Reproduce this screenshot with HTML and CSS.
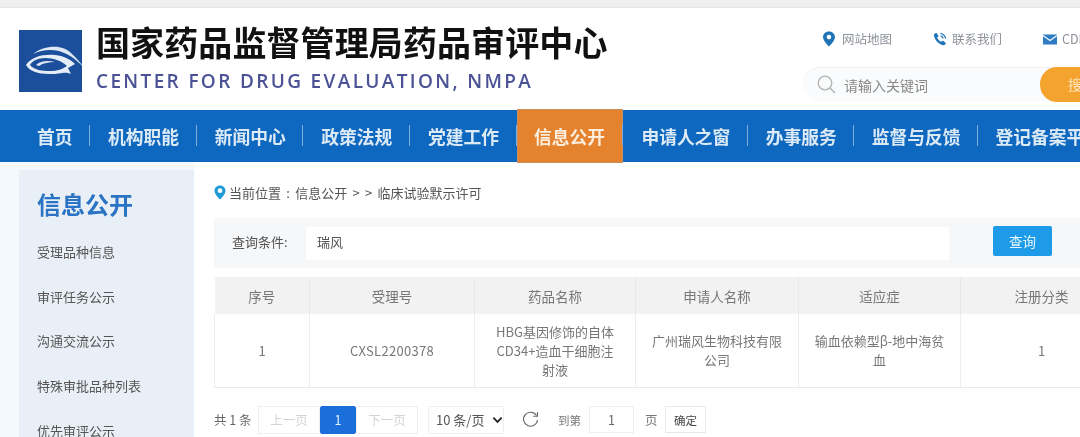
FILE: index.html
```html
<!DOCTYPE html>
<html lang="zh-CN">
<head>
<meta charset="utf-8">
<title>国家药品监督管理局药品审评中心</title>
<link rel="stylesheet" href="styles.css">
</head>
<body>
<div class="page">
  <div class="topstrip"></div>
  <header class="header">
    <svg class="logo" viewBox="0 0 63 62" aria-hidden="true">
      <rect width="63" height="62" fill="#1b4f9c"/>
      <path d="M14 24C26 15 44 14 53 24C58 29 62 33 65 38C58 30 50 24 40 21C31 19 22 20 14 24Z" fill="#dfe8f4"/>
      <path d="M7 35C12 27 24 24 36 25C46 26 52 30 56 34L49 38L52 44C46 41 42 44 30 44C19 44 10 41 7 35ZM11 35C15 40 23 41 31 41C38 41 44 39 48 36C43 31 35 28 26 28C19 28 13 31 11 35Z" fill="#e6edf6" fill-rule="evenodd"/>
      <path d="M17 35C21 31 29 30 36 32C30 32 24 33 20 36Z" fill="#dfe8f4"/>
    </svg>
    <div class="brand">
      <h1 class="brand-cn">国家药品监督管理局药品审评中心</h1>
      <p class="brand-en">CENTER FOR DRUG EVALUATION, NMPA</p>
    </div>
    <div class="tools">
      <div class="tool-links">
        <span class="tool tool-map">
          <svg class="tool-icon" viewBox="0 0 14 16" aria-hidden="true"><path d="M7 0.5C3.4 0.5 1 3 1 6C1 10 7 15.5 7 15.5S13 10 13 6C13 3 10.600 0.5 7 0.5ZM7 3.800A2.300 2.300 0 1 1 7 8.400A2.300 2.300 0 0 1 7 3.800Z" fill="#1f74b8" fill-rule="evenodd"/></svg>
          网站地图
        </span>
        <span class="tool tool-phone">
          <svg class="tool-icon" viewBox="0 0 15 15" aria-hidden="true"><path d="M1 2.500L3.500 0.800L6 4.300L4.500 5.800C5 7.500 7 9.800 9 10.500L10.500 9.200L14 12L12 14.300C7 14.500 0.800 8 1 2.500Z" fill="#1f74b8"/><path d="M8 1.500C10.800 2 12.800 4 13.500 7M8 4.200C9.500 4.500 10.500 5.500 11 7" fill="none" stroke="#1f74b8" stroke-width="1.200"/></svg>
          联系我们
        </span>
        <span class="tool tool-mail">
          <svg class="tool-icon mail" viewBox="0 0 14 11" aria-hidden="true"><rect y="0.500" width="14" height="10" fill="#2f7bc4"/><path d="M0 1.500L7 6.500L14 1.500" fill="none" stroke="#fff" stroke-width="1.100"/></svg>
          CDE
        </span>
      </div>
      <div class="searchbar">
        <svg class="search-icon" viewBox="0 0 19 19" aria-hidden="true"><circle cx="8" cy="8" r="6.800" fill="none" stroke="#b3b3b3" stroke-width="1.300"/><path d="M13 13L18 18" stroke="#b3b3b3" stroke-width="1.500"/></svg>
        <span class="placeholder">请输入关键词</span>
        <span class="search-btn">搜索</span>
      </div>
    </div>
  </header>
  <nav class="nav">
    <a class="nav-item">首页</a>
    <a class="nav-item">机构职能</a>
    <a class="nav-item">新闻中心</a>
    <a class="nav-item">政策法规</a>
    <a class="nav-item">党建工作</a>
    <a class="nav-item active">信息公开</a>
    <a class="nav-item wide">申请人之窗</a>
    <a class="nav-item slim">办事服务</a>
    <a class="nav-item slim">监督与反馈</a>
    <a class="nav-item">登记备案平台</a>
  </nav>
  <div class="content">
    <aside class="sidebar">
      <h2 class="side-title">信息公开</h2>
      <ul class="side-list">
        <li>受理品种信息</li>
        <li>审评任务公示</li>
        <li>沟通交流公示</li>
        <li>特殊审批品种列表</li>
        <li>优先审评公示</li>
      </ul>
    </aside>
    <main class="main">
      <div class="crumb">
        <svg class="crumb-icon" viewBox="0 0 12 15" aria-hidden="true"><path d="M6 0.500C2.800 0.500 0.500 2.800 0.500 5.700C0.500 9.500 6 14.500 6 14.500S11.500 9.500 11.500 5.700C11.500 2.800 9.200 0.500 6 0.500ZM6 3.300A2.400 2.400 0 1 1 6 8.100A2.400 2.400 0 0 1 6 3.300Z" fill="#1e9ad6" fill-rule="evenodd"/></svg>
        <span>当前位置 : 信息公开 &gt; &gt; 临床试验默示许可</span>
      </div>
      <div class="query">
        <span class="query-label">查询条件:</span>
        <div class="query-input">瑞风</div>
        <button class="query-btn" type="button">查询</button>
      </div>
      <div class="table-wrap">
        <table class="grid">
          <colgroup>
            <col class="c1"><col class="c2"><col class="c3"><col class="c4"><col class="c5"><col class="c6">
          </colgroup>
          <thead>
            <tr><th>序号</th><th>受理号</th><th>药品名称</th><th>申请人名称</th><th>适应症</th><th>注册分类</th></tr>
          </thead>
          <tbody>
            <tr>
              <td>1</td>
              <td class="code">CXSL2200378</td>
              <td>HBG基因修饰的自体CD34+造血干细胞注射液</td>
              <td class="tight">广州瑞风生物科技有限公司</td>
              <td class="tight">输血依赖型β-地中海贫血</td>
              <td>1</td>
            </tr>
          </tbody>
        </table>
      </div>
      <div class="pager">
        <span class="total">共 1 条</span>
        <div class="pages">
          <span class="page-btn off">上一页</span>
          <span class="page-btn cur">1</span>
          <span class="page-btn off">下一页</span>
        </div>
        <div class="size">10 条/页
          <svg class="chev" viewBox="0 0 12 8" aria-hidden="true"><path d="M1.500 1.500L6 6L10.500 1.500" fill="none" stroke="#222" stroke-width="2"/></svg>
        </div>
        <svg class="refresh" viewBox="0 0 17 17" aria-hidden="true"><path d="M14.500 4.500A7 7 0 1 0 15.500 9" fill="none" stroke="#666" stroke-width="1.100"/><path d="M15.500 1V5.200H11.300" fill="none" stroke="#666" stroke-width="1.100"/></svg>
        <span class="goto">到第</span>
        <span class="goto-input">1</span>
        <span class="goto-page">页</span>
        <span class="confirm">确定</span>
      </div>
    </main>
  </div>
</div>
</body>
</html>
```
FILE: styles.css
```css
* { box-sizing: border-box; }
html, body { margin: 0; padding: 0; }
body {
  width: 1080px;
  height: 437px;
  overflow: hidden;
  background: #fff;
  font-family: "Noto Sans CJK SC", "Liberation Sans", sans-serif;
  color: #666;
}
.page { width: 1080px; height: 437px; overflow: hidden; filter: blur(0.5px); }
.topstrip { height: 8px; background: #efefef; border-bottom: 1px solid #e4e4e4; }

.header { display: flex; height: 102px; padding-left: 19px; overflow: hidden; background: #fff; }
.logo { flex: none; width: 63px; height: 62px; margin-top: 22px; }
.brand { flex: none; width: 512px; margin-left: 14px; }
.brand-cn {
  margin: 12px 0 0;
  font-size: 34px;
  line-height: 44px;
  font-weight: 700;
  letter-spacing: 0.1px;
  color: #111;
  white-space: nowrap;
}
.brand-en {
  margin: 4px 0 0;
  font-family: "Open Sans", sans-serif;
  font-size: 19px;
  line-height: 26px;
  font-weight: 600;
  letter-spacing: 2.35px;
  color: #4b5296;
  white-space: nowrap;
}
.tools { flex: none; width: 340px; margin-left: 195px; }
.tool-links { display: flex; height: 62px; padding: 21px 0 0 19px; font-size: 12.500px; line-height: 20px; color: #8d9299; }
.tool { display: inline-flex; align-items: center; height: 20px; white-space: nowrap; }
.tool-map { width: 111px; gap: 6px; }
.tool-phone { width: 110px; gap: 5px; }
.tool-mail { gap: 5px; }
.tool-icon { width: 14px; height: 16px; flex: none; }
.tool-icon.mail { height: 11px; }
.searchbar {
  display: flex;
  align-items: center;
  height: 34px;
  margin-top: -3px;
  padding-left: 14px;
  background: #fafbfc;
  border-radius: 17px 0 0 17px;
  border-top: 1px solid #f0f0f0;
}
.search-icon { width: 19px; height: 19px; flex: none; }
.placeholder { flex: none; margin-left: 8px; width: 196px; font-size: 14px; color: #888; white-space: nowrap; }
.search-btn {
  flex: none;
  width: 90px;
  height: 35px;
  margin-top: -1px;
  padding-left: 28px;
  border-radius: 17px;
  background: #f5a32f;
  color: #fde6c4;
  font-size: 14px;
  line-height: 35px;
}

.nav {
  display: flex;
  height: 52px;
  padding-left: 19px;
  background: #0f68bf;
  white-space: nowrap;
}
.nav-item {
  position: relative;
  flex: none;
  padding: 0 17.600px 0 18px;
  font-size: 17.750px;
  line-height: 52px;
  font-weight: 700;
  color: #dceaf6;
}
.nav-item::after {
  content: "";
  position: absolute;
  right: 0;
  top: 15px;
  width: 1px;
  height: 21px;
  background: #7fb0dd;
}
.nav-item.active {
  height: 54px;
  margin-top: -1px;
  padding: 0 17.500px;
  background: #e5822d;
  line-height: 54px;
  color: #fbeedd;
  outline: 1px solid #c98f5f;
  outline-offset: -1px;
}
.nav-item.wide { padding: 0 17.500px 0 19px; }
.nav-item.slim { padding: 0 17px 0 18px; }

.content { display: flex; height: 275px; background: #f3f9fc; padding-top: 8px; }
.sidebar { flex: none; width: 175px; margin-left: 19px; padding: 19px 0 0 18px; background: #e9eff6; }
.side-title { margin: 0; font-size: 24px; line-height: 30px; font-weight: 700; color: #2b73c5; white-space: nowrap; }
.side-list { margin: 23px 0 0; padding: 0; list-style: none; font-size: 13px; color: #555; }
.side-list li { height: 44.700px; line-height: 20px; white-space: nowrap; }

.main { flex: none; width: 886px; margin-top: -8px; padding: 8px 0 0 20px; background: #fff; overflow: hidden; }
.crumb { display: flex; align-items: center; gap: 3px; height: 30px; margin-top: 7px; font-size: 13px; color: #555; white-space: nowrap; word-spacing: 2.400px; }
.crumb-icon { width: 12px; height: 15px; flex: none; }
.query { display: flex; align-items: center; height: 50px; margin-top: 11px; padding-left: 18px; background: #f6f7f9; }
.query-label { flex: none; width: 74px; margin-top: -3px; font-size: 13px; color: #555; white-space: nowrap; }
.query-input { flex: none; width: 643px; height: 33px; padding-left: 11px; background: #fff; font-size: 13px; line-height: 30px; color: #555; }
.query-btn {
  flex: none;
  width: 59px;
  height: 30px;
  margin: -4px 0 0 44px;
  padding: 0;
  border: 0;
  border-radius: 2px;
  background: #1e9be8;
  color: #e6f5ff;
  font: 13.500px "Noto Sans CJK SC", sans-serif;
}
.table-wrap { margin-top: 9px; overflow: hidden; }
.grid { width: 908px; border-collapse: collapse; table-layout: fixed; font-size: 13px; color: #777; text-align: center; }
.c1 { width: 95px; } .c2 { width: 165px; } .c3 { width: 161px; } .c4 { width: 163px; } .c5 { width: 162px; } .c6 { width: 162px; }
.grid th { height: 37px; padding: 0; background: #f2f2f2; font-weight: 400; font-size: 13.500px; border-right: 1px solid #e9e9e9; }
.grid td { height: 73px; padding: 0 20px; line-height: 19px; border-right: 1px solid #eeeeee; border-bottom: 1px solid #eaeaea; }
.grid td:first-child { border-left: 1px solid #eeeeee; }
.grid td.tight { padding: 0 15px; }
.grid td.code { letter-spacing: 0.300px; }

.pager { display: flex; align-items: center; height: 28px; margin-top: 18px; font-size: 12.500px; color: #666; white-space: nowrap; }
.total { width: 44px; flex: none; }
.pages { display: flex; flex: none; height: 28px; }
.page-btn { height: 28px; line-height: 26px; text-align: center; border: 1px solid #efefef; }
.page-btn.off { width: 62px; color: #d4d4d4; }
.page-btn.cur { width: 36px; background: #1a6fdb; border-color: #1a6fdb; border-radius: 2px; color: #e6f0fc; }
.size { display: flex; align-items: center; flex: none; gap: 8px; width: 76px; height: 28px; margin-left: 10px; padding-left: 7px; border: 1px solid #efefef; color: #555; font-size: 13px; }
.chev { width: 11px; height: 8px; flex: none; }
.refresh { width: 17px; height: 17px; flex: none; margin-left: 18px; }
.goto { margin-left: 19px; flex: none; width: 31px; color: #777; font-size: 11.500px; }
.goto-input { flex: none; width: 45px; height: 27px; line-height: 25px; text-align: center; border: 1px solid #efefef; }
.goto-page { flex: none; width: 31px; padding-left: 11px; color: #777; }
.confirm { flex: none; width: 41px; height: 27px; line-height: 27px; text-align: center; border: 1px solid #e8e8e8; color: #444; font-size: 11.500px; }
```
